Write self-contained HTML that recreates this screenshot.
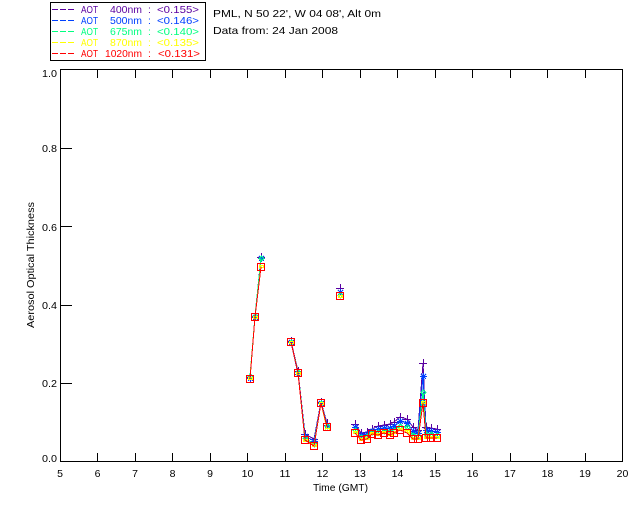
<!DOCTYPE html>
<html>
<head>
<meta charset="utf-8">
<style>
html,body{margin:0;padding:0;background:#fff;width:640px;height:512px;overflow:hidden}
svg{display:block}
text{font-family:"Liberation Sans",sans-serif;font-size:10.5px;fill:#000}
.a{shape-rendering:crispEdges}
.pu text{fill:#5a00a0}.bl text{fill:#0040ff}.gr text{fill:#00ff80}.ye text{fill:#ffff00}.re text{fill:#ff0000}
polyline{fill:none;stroke-width:1;shape-rendering:crispEdges}
marker path,marker rect{shape-rendering:crispEdges}
</style>
</head>
<body>
<svg width="640" height="512" viewBox="0 0 640 512" xmlns="http://www.w3.org/2000/svg">
<defs>
<marker id="mp" markerUnits="userSpaceOnUse" markerWidth="12" markerHeight="12" refX="6" refY="6"><path d="M6.500 2V10M2 6.500H10" stroke="#5a00a0" stroke-width="1" fill="none"/></marker>
<marker id="mb" markerUnits="userSpaceOnUse" markerWidth="12" markerHeight="12" refX="6" refY="6"><path d="M6.500 3V10M3 6.500H10M4 4L9 9M9 4L4 9" stroke="#0040ff" stroke-width="1" fill="none"/></marker>
<marker id="mg" markerUnits="userSpaceOnUse" markerWidth="12" markerHeight="12" refX="6" refY="6"><path d="M6.500 4L9 6.500L6.500 9L4 6.500Z" stroke="#00ff80" stroke-width="1" fill="none"/></marker>
<marker id="my" markerUnits="userSpaceOnUse" markerWidth="12" markerHeight="12" refX="6" refY="6"><path d="M4.500 5.500H8.500V7.500H4.500Z" stroke="#ffff00" stroke-width="1" fill="none"/></marker>
<marker id="mr" markerUnits="userSpaceOnUse" markerWidth="12" markerHeight="12" refX="6" refY="6"><rect x="2.500" y="2.500" width="7" height="7" stroke="#ff0000" stroke-width="1" fill="none"/></marker>
</defs>

<!-- legend -->
<rect x="50.500" y="2.500" width="155" height="58" fill="#fff" stroke="#000" class="a"/>
<g class="a" stroke-width="1" stroke-dasharray="6 2">
<path d="M52 9.500H75" stroke="#5a00a0"/>
<path d="M52 20.500H75" stroke="#0040ff"/>
<path d="M52 31.500H75" stroke="#00ff80"/>
<path d="M52 42.500H75" stroke="#ffff00"/>
<path d="M52 53.500H75" stroke="#ff0000"/>
</g>
<g class="pu"><text x="81" y="13" textLength="17" lengthAdjust="spacingAndGlyphs">AOT</text><text x="110" y="13" textLength="32" lengthAdjust="spacingAndGlyphs">400nm</text><text x="148" y="13">:</text><text x="157" y="13" textLength="42" lengthAdjust="spacingAndGlyphs">&lt;0.155&gt;</text></g>
<g class="bl"><text x="81" y="24" textLength="17" lengthAdjust="spacingAndGlyphs">AOT</text><text x="110" y="24" textLength="32" lengthAdjust="spacingAndGlyphs">500nm</text><text x="148" y="24">:</text><text x="157" y="24" textLength="42" lengthAdjust="spacingAndGlyphs">&lt;0.146&gt;</text></g>
<g class="gr"><text x="81" y="35" textLength="17" lengthAdjust="spacingAndGlyphs">AOT</text><text x="110" y="35" textLength="32" lengthAdjust="spacingAndGlyphs">675nm</text><text x="148" y="35">:</text><text x="157" y="35" textLength="42" lengthAdjust="spacingAndGlyphs">&lt;0.140&gt;</text></g>
<g class="ye"><text x="81" y="46" textLength="17" lengthAdjust="spacingAndGlyphs">AOT</text><text x="110" y="46" textLength="32" lengthAdjust="spacingAndGlyphs">870nm</text><text x="148" y="46">:</text><text x="157" y="46" textLength="42" lengthAdjust="spacingAndGlyphs">&lt;0.135&gt;</text></g>
<g class="re"><text x="81" y="57" textLength="17" lengthAdjust="spacingAndGlyphs">AOT</text><text x="105" y="57" textLength="37" lengthAdjust="spacingAndGlyphs">1020nm</text><text x="148" y="57">:</text><text x="158" y="57" textLength="42" lengthAdjust="spacingAndGlyphs">&lt;0.131&gt;</text></g>

<!-- header -->
<text x="213" y="17" textLength="168" lengthAdjust="spacingAndGlyphs">PML, N 50 22', W 04 08', Alt 0m</text>
<text x="213" y="34" textLength="125" lengthAdjust="spacingAndGlyphs">Data from: 24 Jan 2008</text>

<!-- axes -->
<g class="a" fill="none" stroke="#000" stroke-width="1">
<rect x="60.500" y="69.500" width="562" height="392"/>
<path d="M97.500 461V453M135.500 461V453M172.500 461V453M210.500 461V453M247.500 461V453M285.500 461V453M322.500 461V453M360.500 461V453M397.500 461V453M435.500 461V453M472.500 461V453M510.500 461V453M547.500 461V453M585.500 461V453"/>
<path d="M97.500 70V78M135.500 70V78M172.500 70V78M210.500 70V78M247.500 70V78M285.500 70V78M322.500 70V78M360.500 70V78M397.500 70V78M435.500 70V78M472.500 70V78M510.500 70V78M547.500 70V78M585.500 70V78"/>
<path d="M60 383.500H72M60 305.500H72M60 226.500H72M60 148.500H72"/>
</g>

<!-- y labels -->
<g text-anchor="end">
<text x="57" y="77" textLength="15" lengthAdjust="spacingAndGlyphs">1.0</text>
<text x="57" y="152" textLength="15" lengthAdjust="spacingAndGlyphs">0.8</text>
<text x="57" y="231" textLength="15" lengthAdjust="spacingAndGlyphs">0.6</text>
<text x="57" y="309" textLength="15" lengthAdjust="spacingAndGlyphs">0.4</text>
<text x="57" y="387" textLength="15" lengthAdjust="spacingAndGlyphs">0.2</text>
<text x="57" y="462" textLength="15" lengthAdjust="spacingAndGlyphs">0.0</text>
</g>
<text transform="translate(34 328) rotate(-90)" textLength="126" lengthAdjust="spacingAndGlyphs">Aerosol Optical Thickness</text>

<!-- x labels -->
<g text-anchor="middle">
<text x="60" y="477">5</text><text x="97.500" y="477">6</text><text x="135" y="477">7</text><text x="172.500" y="477">8</text><text x="210" y="477">9</text>
<text x="247.500" y="477">10</text><text x="285" y="477">11</text><text x="322.500" y="477">12</text><text x="360" y="477">13</text><text x="397.500" y="477">14</text>
<text x="435" y="477">15</text><text x="472.500" y="477">16</text><text x="510" y="477">17</text><text x="547.500" y="477">18</text><text x="585" y="477">19</text><text x="622.500" y="477">20</text>
</g>
<text x="313" y="491" textLength="55" lengthAdjust="spacingAndGlyphs">Time (GMT)</text>

<!-- purple -->
<g stroke="#5a00a0" style="marker:url(#mp)">
<polyline points="250,377 255,316 261,257"/>
<polyline points="291,341 298,371 305,434 314,439 321,402 327,423"/>
<polyline points="340,288 340,288"/>
<polyline points="355,424 361,433 367,432 372,429 378,426 384,425 390,424 394,422 400,417 407,419 413,427 418,430 423,363 426,427 431,428 437,429"/>
</g>
<!-- blue -->
<g stroke="#0040ff" style="marker:url(#mb)">
<polyline points="250,378 255,317 261,258"/>
<polyline points="291,342 298,374 305,436 314,441 321,403 327,425"/>
<polyline points="340,292 340,292"/>
<polyline points="355,427 361,435 367,434 372,431 378,429 384,428 390,428 394,426 400,421 407,423 413,431 418,433 423,376 426,430 431,431 437,432"/>
</g>
<!-- green -->
<g stroke="#00ff80" style="marker:url(#mg)">
<polyline points="250,376 255,316 261,258"/>
<polyline points="291,342 298,372 305,438 314,444 321,403 327,426"/>
<polyline points="340,295 340,295"/>
<polyline points="355,430 361,437 367,436 372,432 378,432 384,431 390,431 394,430 400,426 407,427 413,435 418,436 423,392 426,434 431,434 437,435"/>
</g>
<!-- yellow -->
<g stroke="#ffff00" style="marker:url(#my)">
<polyline points="250,378 255,317 261,266"/>
<polyline points="291,342 298,373 305,440 314,445 321,403 327,429"/>
<polyline points="340,296 340,296"/>
<polyline points="355,432 361,439 367,438 372,433 378,434 384,432 390,434 394,432 400,429 407,431 413,438 418,438 423,402 426,437 431,437 437,437"/>
</g>
<!-- red -->
<g stroke="#ff0000" style="marker:url(#mr)">
<polyline points="250,379 255,317 261,267"/>
<polyline points="291,342 298,373 305,440 314,446 321,403 327,427"/>
<polyline points="340,296 340,296"/>
<polyline points="355,433 361,440 367,439 372,434 378,435 384,433 390,435 394,433 400,430 407,433 413,439 418,439 423,403 426,438 431,438 437,438"/>
</g>
</svg>
</body>
</html>
